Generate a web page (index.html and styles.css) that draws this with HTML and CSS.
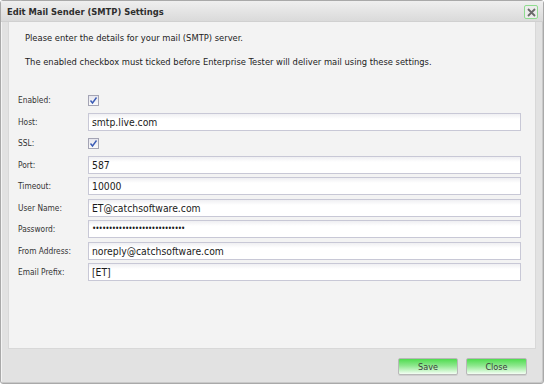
FILE: index.html
```html
<!DOCTYPE html>
<html>
<head>
<meta charset="utf-8">
<link rel="stylesheet" href="styles.css">
</head>
<body>
<div class="window">
  <div class="titlebar">
    <span class="title">Edit Mail Sender (SMTP) Settings</span>
    <span class="close-btn"><svg width="9" height="9" viewBox="0 0 9 9"><path d="M1 1 L8 8 M8 1 L1 8" stroke="#6a6a6a" stroke-width="1.8" fill="none"/></svg></span>
  </div>
  <div class="panel">
    <p class="intro">Please enter the details for your mail (SMTP) server.</p>
    <p class="intro second">The enabled checkbox must ticked before Enterprise Tester will deliver mail using these settings.</p>
    <div class="form">
      <span class="label">Enabled:</span>
      <span class="check-cell"><span class="checkbox"><svg width="9" height="9" viewBox="0 0 9 9"><path d="M1.5 4.5 L3.5 7 L7.5 1.5" stroke="#3a5bb5" stroke-width="1.4" fill="none"/></svg></span></span>
      <span class="label">Host:</span>
      <span class="field">smtp.live.com</span>
      <span class="label">SSL:</span>
      <span class="check-cell"><span class="checkbox"><svg width="9" height="9" viewBox="0 0 9 9"><path d="M1.5 4.5 L3.5 7 L7.5 1.5" stroke="#3a5bb5" stroke-width="1.4" fill="none"/></svg></span></span>
      <span class="label">Port:</span>
      <span class="field">587</span>
      <span class="label">Timeout:</span>
      <span class="field">10000</span>
      <span class="label">User Name:</span>
      <span class="field">ET@catchsoftware.com</span>
      <span class="label">Password:</span>
      <span class="field dots">••••••••••••••••••••••••••••</span>
      <span class="label">From Address:</span>
      <span class="field">noreply@catchsoftware.com</span>
      <span class="label">Email Prefix:</span>
      <span class="field">[ET]</span>
    </div>
  </div>
  <div class="footer">
    <span class="btn">Save</span>
    <span class="btn close">Close</span>
  </div>
</div>
</body>
</html>
```
FILE: styles.css
```css
* { box-sizing: border-box; }
html, body { margin: 0; padding: 0; background: #ffffff; }
body { font-family: "DejaVu Sans Condensed", "DejaVu Sans", sans-serif; color: #222; }

.window {
  width: 544px;
  height: 384px;
  border: 1px solid #a9a9a9;
  border-radius: 3px;
  background: #e2e2e2;
  box-shadow: inset 1px 1px 0 #f4f4f4, inset -1px -1px 0 #c9c9c9;
  display: flex;
  flex-direction: column;
}

.titlebar {
  height: 21px;
  flex: none;
  display: flex;
  align-items: center;
  justify-content: space-between;
  padding: 0 5px 0 6px;
  background: linear-gradient(#efefef, #dadada);
  border-bottom: 1px solid #d0d0d0;
}

.title {
  font-weight: bold;
  font-size: 9.3px;
  color: #2e2e2e;
}

.close-btn {
  width: 14px;
  height: 14px;
  border: 1px solid #8edc8e;
  border-radius: 2px;
  background: #ececec;
  display: flex;
  align-items: center;
  justify-content: center;
  margin-top: 2px;
}

.panel {
  margin: 0 7px 0 7px;
  height: 327px;
  flex: none;
  background: #f3f3f3;
  border: 1px solid #d8d8d8;
  border-top: none;
  padding: 9px 14px 0 9px;
}

.intro {
  margin: 0 0 10px 7px;
  font-size: 9.3px;
  line-height: 14px;
  color: #222;
}

.intro.second { margin-bottom: 22px; }

.form {
  display: grid;
  grid-template-columns: 70px 1fr;
  grid-auto-rows: 18px;
  row-gap: 3.5px;
  align-items: center;
}

.label {
  font-size: 8.3px;
  color: #333;
}

.check-cell { display: flex; align-items: center; }

.checkbox {
  width: 11px;
  height: 11px;
  border: 1px solid #a4a4b4;
  background: linear-gradient(#e6e6ee, #fafafa);
  display: flex;
  align-items: center;
  justify-content: center;
}

.field {
  height: 18px;
  border: 1px solid #c8c8d6;
  background: linear-gradient(#efeff2, #ffffff 5px);
  font-size: 10.3px;
  line-height: 16px;
  padding-left: 3px;
  color: #1a1a1a;
}

.field.dots { font-size: 8px; letter-spacing: -0.95px; }

.footer {
  flex: 1;
  display: flex;
  justify-content: flex-end;
  align-items: center;
  gap: 8px;
  padding: 1px 16px 0 0;
}

.btn {
  width: 60px;
  height: 17px;
  border: 1px solid #b8b8b8;
  border-radius: 2px;
  background: linear-gradient(#4fdc4f, #8ee88e 45%, #f4fff4);
  font-size: 9px;
  color: #3a3a3a;
  display: flex;
  align-items: center;
  justify-content: center;
  box-shadow: 0 1px 0 #cfcfcf;
}

.btn.close { width: 61px; }
```
